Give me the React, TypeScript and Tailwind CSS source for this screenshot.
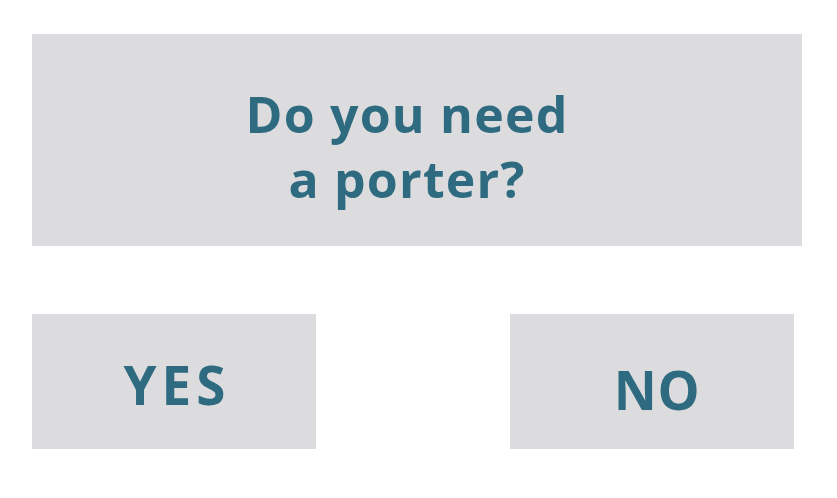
export default function App() {
    return (
        <div className="w-[837px] h-[498px] bg-white pt-[34px] pl-[32px] font-['Open_Sans',sans-serif] font-bold text-[#2f6b80]">
            <div className="w-[770px] h-[212px] bg-[#dcdcde] flex items-center justify-center pr-[20px]">
                <h1 className="text-[50px] leading-[65px] text-center tracking-[1.2px] pt-[14px]">
                    Do you need
                    <br />
                    a porter?
                </h1>
            </div>
            <div className="flex mt-[68px]">
                <button className="w-[284px] h-[135px] bg-[#dcdcde] flex items-center justify-center text-[53px] tracking-[5px] pt-[6px] pl-[6px]">
                    YES
                </button>
                <button className="w-[284px] h-[135px] ml-[194px] bg-[#dcdcde] flex items-center justify-center text-[53px] tracking-[0.5px] pt-[16px] pl-[10px]">
                    NO
                </button>
            </div>
        </div>
    );
}
